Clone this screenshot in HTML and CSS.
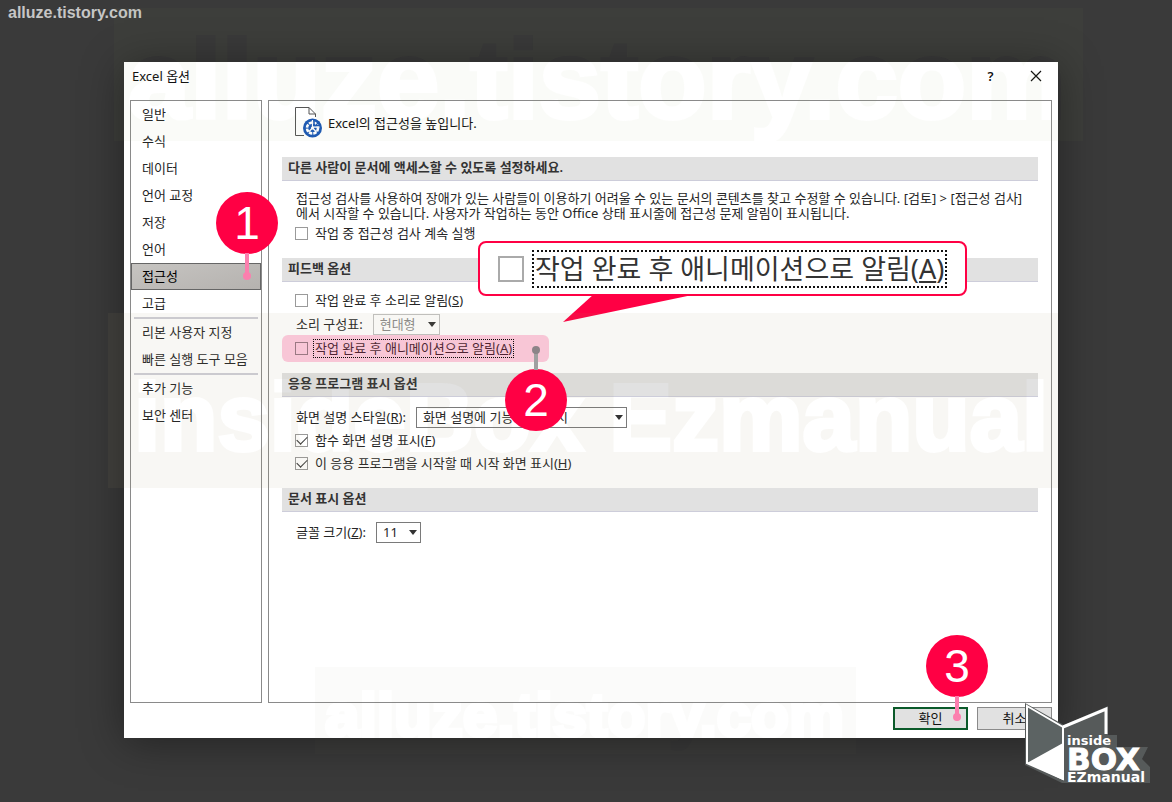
FILE: index.html
```html
<!DOCTYPE html>
<html lang="ko">
<head>
<meta charset="utf-8">
<meta name="viewport" content="width=device-width, initial-scale=1">
<title>Excel 옵션</title>
<link rel="stylesheet" href="styles.css">
</head>
<body>
<div class="site-name">alluze.tistory.com</div>

<main class="dialog">
  <header class="titlebar">
    <h1 class="title">Excel 옵션</h1>
    <button class="title-btn" type="button" aria-label="도움말">?</button>
    <button class="title-btn" type="button" aria-label="닫기">
      <svg width="12" height="12" viewBox="0 0 12 12"><path d="M1 1 11 11M11 1 1 11" stroke="#111" stroke-width="1.2" fill="none"/></svg>
    </button>
  </header>

  <div class="panels">
    <nav class="sidebar">
      <a class="item" href="#general">일반</a>
      <a class="item" href="#formulas">수식</a>
      <a class="item" href="#data">데이터</a>
      <a class="item" href="#proofing">언어 교정</a>
      <a class="item" href="#save">저장</a>
      <a class="item" href="#language">언어</a>
      <div class="anchor">
        <a class="item selected" href="#accessibility" aria-current="page">접근성</a>
        <div class="pin pin-one"><span class="pin-num">1</span></div>
      </div>
      <a class="item" href="#advanced">고급</a>
      <hr class="sep">
      <a class="item" href="#ribbon">리본 사용자 지정</a>
      <a class="item" href="#quick">빠른 실행 도구 모음</a>
      <hr class="sep">
      <a class="item" href="#addins">추가 기능</a>
      <a class="item" href="#trust">보안 센터</a>
    </nav>

    <div class="content">
      <div class="intro">
        <svg width="28" height="32" viewBox="0 0 28 32">
          <path d="M9 28.500H.5V.5H14l6.500 6.500v3M14 .5V7h6.500" fill="#fff" stroke="#555" stroke-width="1"/>
          <circle cx="17.500" cy="21" r="10" fill="#fff"/>
          <circle cx="17.500" cy="21" r="9.500" fill="#1a57b5"/>
          <circle cx="17.500" cy="21" r="5.500" fill="none" stroke="#fff" stroke-width="2.600" stroke-dasharray="3.300 1.020"/>
          <path d="M17.500 13v7M17.500 21l-4 4M17.500 21l4 4M17.500 20h7" stroke="#fff" stroke-width="1.300"/>
          <path d="M19 12v6.500h7" fill="none" stroke="#1a57b5" stroke-width="1.500"/>
          <circle cx="17.500" cy="21" r="1.600" fill="#fff"/>
        </svg>
        <span>Excel의 접근성을 높입니다.</span>
      </div>

      <section>
        <h2 class="section-title">다른 사람이 문서에 액세스할 수 있도록 설정하세요.</h2>
        <p class="note">접근성 검사를 사용하여 장애가 있는 사람들이 이용하기 어려울 수 있는 문서의 콘텐츠를 찾고 수정할 수 있습니다. [검토] &gt; [접근성 검사]<br>에서 시작할 수 있습니다. 사용자가 작업하는 동안 Office 상태 표시줄에 접근성 문제 알림이 표시됩니다.</p>
        <div class="row"><label class="check"><input type="checkbox"><span>작업 중 접근성 검사 계속 실행</span></label></div>
      </section>

      <section class="anchor">
        <h2 class="section-title">피드백 옵션</h2>
        <div class="rows feedback">
          <div class="row"><label class="check"><input type="checkbox"><span>작업 완료 후 소리로 알림(<u>S</u>)</span></label></div>
          <div class="row scheme">
            <label for="scheme">소리 구성표:</label>
            <span class="combo combo-off"><select id="scheme" disabled><option>현대형</option></select></span>
          </div>
          <div class="row marked">
            <label class="check"><input type="checkbox"><span class="focus">작업 완료 후 애니메이션으로 알림(<u>A</u>)</span></label>
            <div class="pin pin-two"><span class="pin-num">2</span></div>
          </div>
        </div>
        <div class="callout">
          <svg class="callout-tail" width="134" height="28" viewBox="0 0 134 28"><path d="M31 0H134L0 28Z" fill="#ff0044"/></svg>
          <label class="callout-check"><input type="checkbox"><span class="callout-focus">작업 완료 후 애니메이션으로 알림(<u>A</u>)</span></label>
        </div>
      </section>

      <section>
        <h2 class="section-title">응용 프로그램 표시 옵션</h2>
        <div class="rows">
          <div class="row">
            <label for="tips">화면 설명 스타일(<u>R</u>):</label>
            <span class="combo combo-wide"><select id="tips"><option>화면 설명에 기능 설명 표시</option></select></span>
          </div>
          <div class="row"><label class="check"><input type="checkbox" checked><span>함수 화면 설명 표시(<u>F</u>)</span></label></div>
          <div class="row"><label class="check"><input type="checkbox" checked><span>이 응용 프로그램을 시작할 때 시작 화면 표시(<u>H</u>)</span></label></div>
        </div>
      </section>

      <section>
        <h2 class="section-title">문서 표시 옵션</h2>
        <div class="rows">
          <div class="row">
            <label for="size">글꼴 크기(<u>Z</u>):</label>
            <span class="combo combo-small"><select id="size"><option>11</option></select></span>
          </div>
        </div>
      </section>
    </div>
  </div>

  <footer class="actions">
    <div class="anchor">
      <button class="btn primary" type="button">확인</button>
      <div class="pin pin-three"><span class="pin-num">3</span></div>
    </div>
    <button class="btn" type="button">취소</button>
  </footer>
</main>

<svg class="watermarks" viewBox="0 0 1172 802" preserveAspectRatio="none" aria-hidden="true">
  <mask id="m1"><rect x="114" y="8" width="969" height="133" fill="#fff"/><text class="wm" x="128" y="118" font-size="112">alluze.tistory.com</text></mask>
  <mask id="m2"><rect x="108" y="313" width="950" height="175" fill="#fff"/><text class="wm" x="134" y="450" font-size="94">insideBox Ezmanual</text></mask>
  <mask id="m3"><rect x="315" y="667" width="541" height="87" fill="#fff"/><text class="wm" x="325" y="736" font-size="62">alluze.tistory.com</text></mask>
  <rect x="114" y="8" width="969" height="133" fill="rgb(150,165,95)" fill-opacity=".045" mask="url(#m1)"/>
  <rect x="108" y="313" width="950" height="175" fill="rgb(160,145,110)" fill-opacity=".075" mask="url(#m2)"/>
  <rect x="315" y="667" width="541" height="87" fill="rgb(130,140,100)" fill-opacity=".03" mask="url(#m3)"/>
</svg>

<svg class="logo" width="128" height="82" viewBox="0 0 128 82" role="img" aria-label="inside BOX EZmanual">
  <path d="M1 1 40 23 84 4V33H93V45H124L118 57 126 65V81H38L1 63Z" fill="#565a5a"/>
  <path d="M3 4 39 25V77L3 61Z" fill="#5c6363" stroke="#fff" stroke-width="2"/>
  <path d="M39 25 82 7V32" fill="none" stroke="#fff" stroke-width="3"/>
  <path d="M3 61 39 41V78Z" fill="#fff"/>
  <g class="logo-text">
    <text x="43" y="43" font-size="13">inside</text>
    <text class="logo-big" x="43" y="68" font-size="31">BOX</text>
    <text x="43" y="80" font-size="14">EZmanual</text>
  </g>
</svg>
</body>
</html>
```
FILE: styles.css
```css
* { box-sizing: border-box; }

body {
  margin: 0;
  min-height: 100vh;
  padding: 62px 114px 64px 124px;
  display: flex;
  position: relative;
  background: #3a3a3a;
  color: #262626;
  font: 13px/15px "Noto Sans", "Noto Sans CJK KR", sans-serif;
}

h1, h2, p { margin: 0; font-size: 13px; }

button, select, input { font: inherit; color: inherit; margin: 0; }

.site-name {
  position: absolute;
  left: 8px;
  top: 3px;
  color: #c6c6c6;
  font: bold 16px/20px "Liberation Sans", Arial, sans-serif;
}

.dialog {
  flex: 1;
  min-width: 0;
  display: flex;
  flex-direction: column;
  padding: 0 6px;
  background: #fff;
  box-shadow: 0 4px 40px rgba(0, 0, 0, .4);
}

.titlebar { display: flex; align-items: center; height: 38px; padding-bottom: 10px; }
.title { flex: 1; padding-left: 2px; font-weight: 400; color: #111; }
.title-btn {
  width: 45px;
  padding: 0;
  border: 0;
  background: none;
  color: #111;
  font-weight: 600;
  display: grid;
  place-items: center;
}
.titlebar .title-btn:last-child { margin-right: -6px; }

.panels { flex: 1; display: flex; gap: 6px; }

.sidebar { width: 132px; border: 1px solid #8a8a8a; }
.item {
  display: flex;
  align-items: center;
  height: 27px;
  padding-left: 11px;
  color: #262626;
  text-decoration: none;
  white-space: nowrap;
}
.item.selected {
  padding-left: 10px;
  background: linear-gradient(165deg, #c6c4c1, #b5b2af);
  border: 1px solid #666;
  color: #000;
}
.sep { height: 2px; margin: 0 3px; border: 0; background: #cfcfd8; }

.content {
  flex: 1;
  min-width: 0;
  padding: 0 13px;
  border: 1px solid #8a8a8a;
}

.intro {
  display: flex;
  align-items: center;
  gap: 5px;
  height: 56px;
  padding: 0 0 12px 13px;
  color: #111;
}

.section-title {
  height: 24px;
  padding: 0 6px;
  line-height: 21px;
  font-weight: 600;
  color: #333;
  background: #e1e1e1;
  border-bottom: 1px solid #cdcdda;
}

.note { padding: 10px 0 1px 14px; white-space: nowrap; }
.rows { padding-top: 9px; }
.rows.feedback { padding-top: 7px; }
.row { display: flex; align-items: center; height: 23px; padding-left: 14px; }
section .row:last-child { margin-bottom: 13px; }
.row.scheme { margin: 1px 0; }

.check { display: flex; align-items: center; gap: 7px; margin-left: -1px; }

input[type="checkbox"] {
  appearance: none;
  display: grid;
  place-items: center;
  flex: none;
  width: 13px;
  height: 13px;
  border: 1px solid #9a9a9a;
  background: #fff;
}
input[type="checkbox"]:checked::after {
  content: "";
  width: 9px;
  height: 5px;
  margin-bottom: 3px;
  border: solid #333;
  border-width: 0 0 1px 1px;
  rotate: -45deg;
}

.combo { position: relative; display: block; height: 21px; margin-left: 10px; }
.combo select {
  appearance: none;
  display: block;
  width: 100%;
  height: 100%;
  padding: 0 6px;
  border: 1px solid #7a7a7a;
  border-radius: 0;
  background: #fff;
  color: #262626;
  opacity: 1;
}
.combo::after {
  content: "";
  position: absolute;
  right: 4px;
  top: 8px;
  border: 4px solid transparent;
  border-top: 5px solid #333;
  border-bottom: 0;
}
.combo-off { width: 67px; }
.combo-off select { border-color: #c3c3c3; color: #8c8c8c; }
.combo-wide { width: 211px; }
.combo-small { width: 45px; }

.anchor { position: relative; }

.marked { position: relative; }
.marked::before {
  content: "";
  position: absolute;
  left: 0;
  top: -2px;
  width: 267px;
  height: 27px;
  border-radius: 6px;
  background: rgba(255, 110, 165, .36);
}
.marked .check { position: relative; gap: 5px; }
.marked input { background: none; border-color: #9a7684; }
.focus { padding: 1px; border: 1px dotted #000; color: #4a1c30; }

.callout {
  position: absolute;
  left: 196px;
  right: 71px;
  top: -17px;
  height: 55px;
  padding-left: 18px;
  display: flex;
  align-items: center;
  border: 2px solid #ff0044;
  border-radius: 8px;
  background: #fff;
}
.callout-tail { position: absolute; left: 83px; top: 51px; }
.callout-check {
  display: flex;
  align-items: center;
  gap: 8px;
  font-size: 27px;
  line-height: 34px;
  color: #333;
  white-space: nowrap;
}
.callout-check input[type="checkbox"] { width: 26px; height: 26px; border: 2px solid #aaa; }
.callout-focus { padding: 0 1px; border: 2px dotted #111; }

.pin {
  position: absolute;
  z-index: 2;
  width: 62px;
  pointer-events: none;
}
.pin-num {
  display: block;
  height: 62px;
  border-radius: 50%;
  background: #ff0044;
  color: #fff;
  font: 46px/62px "Liberation Sans", Arial, sans-serif;
  text-align: center;
}
.pin::before {
  content: "";
  position: absolute;
  left: 29px;
  top: 61px;
  width: 4px;
  height: 22px;
  background: #fb7fae;
}
.pin::after {
  content: "";
  position: absolute;
  left: 27px;
  top: 80px;
  width: 8px;
  height: 8px;
  border-radius: 50%;
  background: #fb7fae;
}
.pin-one { left: 85px; top: -71px; }
.pin-two { left: 223px; top: 32px; }
.pin-two::before { top: -21px; background: #a0a0a0; }
.pin-two::after { top: -23px; background: #8c8488; }
.pin-three { left: 33px; top: -72px; }
.pin-three::before { height: 18px; }
.pin-three::after { top: 78px; }

.actions { display: flex; justify-content: flex-end; gap: 9px; height: 35px; padding-top: 4px; }
.btn {
  display: block;
  width: 75px;
  height: 23px;
  padding: 0;
  border: 1px solid #8a8a8a;
  background: #e1e1e1;
  color: #111;
}
.btn.primary { border: 2px solid #0b5a2a; }

.watermarks {
  position: absolute;
  inset: 0;
  width: 100%;
  height: 100%;
  pointer-events: none;
}
.wm {
  font-family: "Liberation Sans", Arial, sans-serif;
  font-weight: 700;
  fill: #000;
  stroke: #000;
  stroke-width: 4px;
}

.logo { position: absolute; right: 20px; bottom: 18px; z-index: 3; }
.logo-text {
  font-family: "DejaVu Sans", sans-serif;
  font-weight: 700;
  fill: #fff;
}
.logo-big { stroke: #fff; stroke-width: 1px; }
```
